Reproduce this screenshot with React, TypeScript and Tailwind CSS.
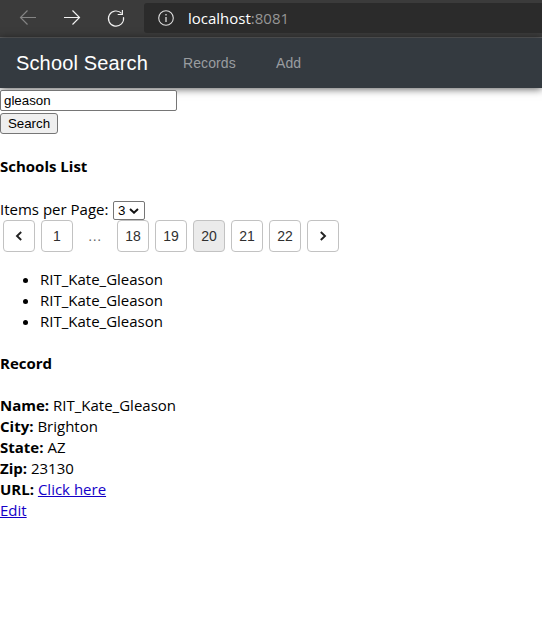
import React from "react";

const pages = ["prev", "1", "…", "18", "19", "20", "21", "22", "next"];

function Chevron({ flip = false }: { flip?: boolean }) {
  return (
    <svg width="8" height="10" viewBox="0 0 8 10" fill="none" stroke="#222" strokeWidth="1.9" className={flip ? "rotate-180" : ""}>
      <path d="M6.2 1 2 5l4.2 4" />
    </svg>
  );
}

function PageItem({ value }: { value: string }) {
  if (value === "…") {
    return <span className="flex h-8 w-8 items-center justify-center pt-px text-[14px] tracking-[0.6px] text-[#666]">...</span>;
  }
  return (
    <button
      className={
        "flex h-8 w-8 items-center justify-center rounded-[4px] border border-[#c2c2c2] text-[14px] text-[#303030] " +
        (value === "20" ? "bg-[#ebebeb]" : "bg-white")
      }
    >
      {value === "prev" ? <Chevron /> : value === "next" ? <Chevron flip /> : value}
    </button>
  );
}

function Field({ label, children }: { label: string; children: React.ReactNode }) {
  return (
    <div className="h-[21px] whitespace-nowrap">
      <b className="font-bold">{label}:</b> {children}
    </div>
  );
}

export default function App() {
  return (
    <div className="h-[633px] w-[542px] overflow-hidden bg-white font-['Open_Sans',sans-serif] text-[15px] leading-[21px] text-black">
      <div className="flex h-[38px] items-start border-b border-[#606163] bg-[#3b3b3b]">
        <svg width="144" height="37" viewBox="0 0 144 37" fill="none" stroke="#f2f2f2" strokeWidth="1.15" className="shrink-0">
          <path d="M36 17.5H20.5M27.5 10.5l-7 7 7 7" stroke="#858585" />
          <path d="M64 17.5h15.5M72.5 10.5l7 7-7 7" />
          <path d="M121.6 13.4A7.6 7.6 0 1 0 123.5 17.2" />
          <path d="M122.4 10v4.5h-4.7" />
        </svg>
        <div className="mt-[3px] flex h-[30px] flex-1 items-center rounded-l-[3px] bg-[#2b2b2b] pl-[14px]">
          <svg width="16" height="16" viewBox="0 0 16 16" fill="none" stroke="#dedede" strokeWidth="1.1">
            <circle cx="8" cy="8" r="7.3" />
            <path d="M8 7v5M8 4v1.4" strokeWidth="1.3" />
          </svg>
          <span className="ml-[14px] text-[15px] text-white">
            localhost<span className="text-[#969696]">:8081</span>
          </span>
        </div>
      </div>
      <nav className="flex h-[50px] items-center bg-[#343a40] pl-4 font-['Liberation_Sans',Arial,sans-serif] shadow-[0_1px_8px_rgba(0,0,0,0.65)]">
        <span className="w-[167px] text-[20px] tracking-[0.14px] text-white">School Search</span>
        <span className="w-[93px] text-[14px] tracking-[0.1px] text-[#9a9da0]">Records</span>
        <span className="text-[14px] tracking-[0.1px] text-[#9a9da0]">Add</span>
      </nav>
      <main className="relative pt-[2px]">
        <input
          defaultValue="gleason"
          className="block h-[21px] w-[177px] rounded-[2px] border border-[#767676] bg-white px-[3px] font-['Liberation_Sans',Arial,sans-serif] text-[13.333px] leading-[17px] outline-none"
        />
        <button className="mt-[2px] block h-[21px] w-[58px] rounded-[3px] border border-[#767676] bg-[#efefef] font-['Liberation_Sans',Arial,sans-serif] text-[13.333px] leading-[18px]">
          Search
        </button>
        <h4 className="mt-[22px] font-bold">Schools List</h4>
        <div className="mt-[22px] flex h-[21px] items-start">
          <span className="w-[113px] whitespace-nowrap">Items per Page:</span>
          <button className="mt-[2px] flex h-[19px] w-8 items-center justify-between rounded-[2px] border border-[#767676] bg-white pl-1 pr-[5px] font-['Liberation_Sans',Arial,sans-serif] text-[13.333px] leading-4">
            3
            <svg width="10" height="6" viewBox="0 0 10 6" fill="none" stroke="#111" strokeWidth="2">
              <path d="m1 1 4 3.7L9 1" />
            </svg>
          </button>
        </div>
        <div className="flex gap-[6px] pl-[3px] font-['Liberation_Sans',Arial,sans-serif]">
          {pages.map((p) => (
            <PageItem key={p} value={p} />
          ))}
        </div>
        <ul className="mt-[17px] list-disc pl-10">
          <li>RIT_Kate_Gleason</li>
          <li>RIT_Kate_Gleason</li>
          <li>RIT_Kate_Gleason</li>
        </ul>
        <h4 className="mt-[21px] font-bold">Record</h4>
        <div className="mt-[21px]">
          <Field label="Name">RIT_Kate_Gleason</Field>
          <Field label="City">Brighton</Field>
          <Field label="State">AZ</Field>
          <Field label="Zip">23130</Field>
          <Field label="URL">
            <a className="text-[#1400c8] underline">Click here</a>
          </Field>
          <a className="text-[#1400c8] underline">Edit</a>
        </div>
      </main>
    </div>
  );
}
